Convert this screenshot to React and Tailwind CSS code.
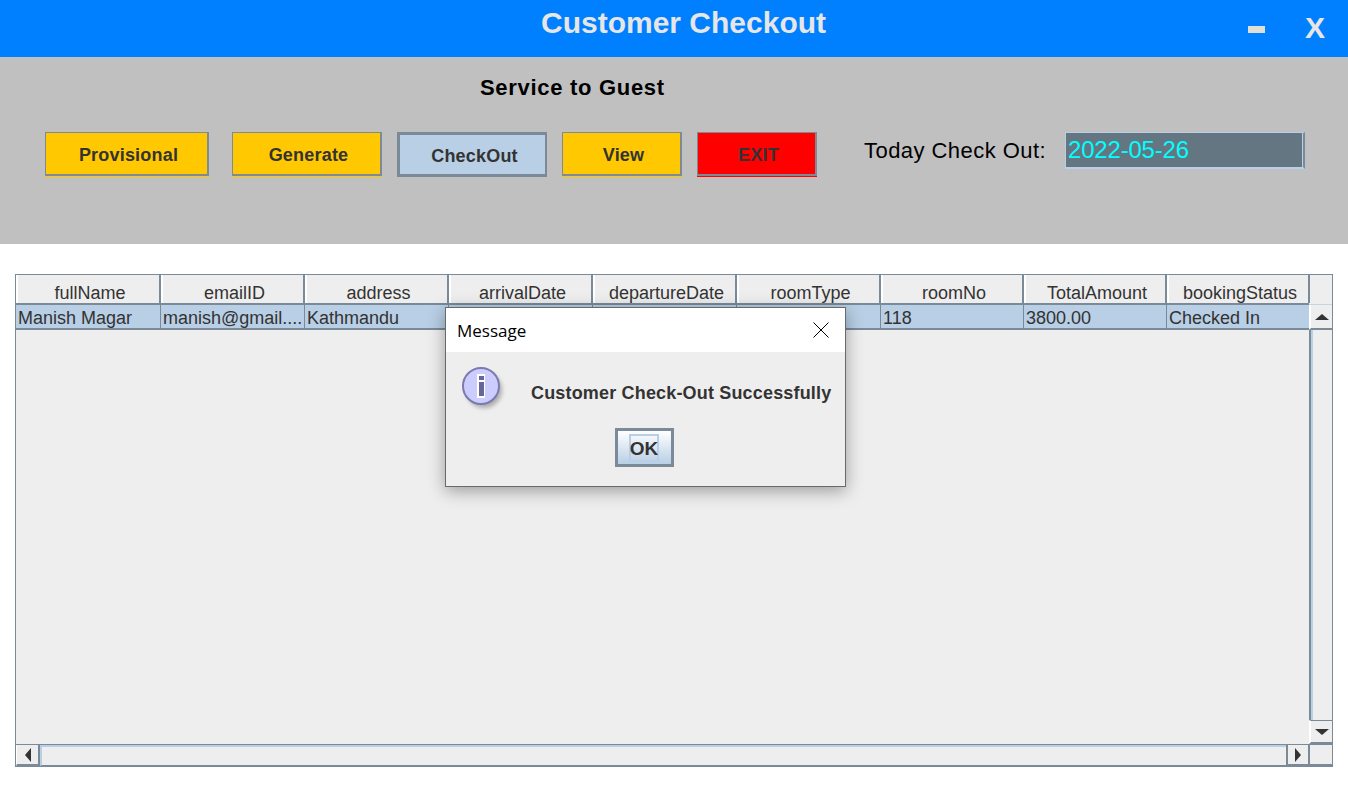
import React from "react";

const columns = [
  { name: "fullName", value: "Manish Magar", width: "w-[145px]" },
  { name: "emailID", value: "manish@gmail....", width: "w-[144px]" },
  { name: "address", value: "Kathmandu", width: "w-[144px]" },
  { name: "arrivalDate", value: "", width: "w-[144px]" },
  { name: "departureDate", value: "", width: "w-[144px]" },
  { name: "roomType", value: "", width: "w-[144px]" },
  { name: "roomNo", value: "118", width: "w-[143px]" },
  { name: "TotalAmount", value: "3800.00", width: "w-[143px]" },
  { name: "bookingStatus", value: "Checked In", width: "w-[143px]" },
];

const flatBorder = "h-[44px] pt-[4px] border-t border-l border-r-2 border-b-2 border-[#7f8a94]";

function ActionButton({ label, className }) {
  return (
    <button className={`flex items-center justify-center pl-[4px] text-[18px] tracking-[0.2px] font-bold text-[#333333] ${className}`}>
      {label}
    </button>
  );
}

function InfoIcon() {
  return (
    <svg width="48" height="48" viewBox="0 0 48 48" className="shrink-0">
      <defs>
        <filter id="soft" x="-30%" y="-30%" width="170%" height="170%">
          <feGaussianBlur stdDeviation="2" />
        </filter>
      </defs>
      <circle cx="22" cy="24" r="18" fill="#777777" opacity="0.55" filter="url(#soft)" />
      <circle cx="19" cy="20" r="18" fill="#ccccff" stroke="#7a7ab0" strokeWidth="2" />
      <rect x="15" y="8" width="8" height="24" fill="#ffffff" />
      <rect x="17" y="10" width="5" height="4" fill="#666699" />
      <rect x="17" y="16" width="5" height="14" fill="#666699" />
    </svg>
  );
}

function MessageDialog() {
  return (
    <div className="absolute left-[445px] top-[307px] w-[401px] h-[180px] flex flex-col bg-[#eeeeee] border border-[#666a6e] shadow-[0_4px_16px_rgba(0,0,0,0.35)]">
      <div className="h-[44px] shrink-0 bg-white flex items-center justify-between pl-[11px] pr-[16px]">
        <span className="pt-[1px] text-[17px] text-black font-['Open_Sans','Noto_Sans',sans-serif]">Message</span>
        <svg width="16" height="16" viewBox="0 0 16 16" className="mb-[1px]">
          <path d="M0.5 0.5 L15.5 15.5 M15.5 0.5 L0.5 15.5" stroke="#000000" strokeWidth="1" fill="none" />
        </svg>
      </div>
      <div className="flex pl-[16px] pt-[14px]">
        <InfoIcon />
        <span className="ml-[21px] mt-[17px] text-[18px] leading-[20px] tracking-[0.17px] font-bold text-[#333333] whitespace-nowrap">
          Customer Check-Out Successfully
        </span>
      </div>
      <div className="flex justify-center pr-[3px] mt-[14px]">
        <button className="w-[59px] h-[39px] border-[3px] border-[#7a8a99] bg-gradient-to-b from-white to-[#b8cfe5] flex items-center justify-center">
          <span className="w-[30px] h-[28px] pt-[3px] border-2 border-[#b8cfe5] flex items-center justify-center text-[19px] font-bold text-[#333333]">
            OK
          </span>
        </button>
      </div>
    </div>
  );
}

export default function App() {
  return (
    <div className="relative w-[1348px] h-[807px] bg-white overflow-hidden font-['Liberation_Sans',Arial,sans-serif]">
      {/* Title bar */}
      <div className="h-[57px] bg-[#0080ff] flex items-start">
        <h1 className="ml-[541px] mt-[5px] text-[30px] leading-[36px] font-bold text-[#e6e6e6]">Customer Checkout</h1>
        <div className="ml-auto mr-[40px] mt-[26px] w-[17px] h-[7px] bg-[#e0dfd8]" />
        <span className="mr-[23px] mt-[10px] text-[30px] leading-[36px] font-bold text-[#e6e6e6]">X</span>
      </div>

      {/* Service panel */}
      <div className="h-[187px] bg-[#c0c0c0]">
        <h2 className="pl-[480px] pt-[18px] text-[22px] leading-[26px] font-bold tracking-[0.7px] text-black">Service to Guest</h2>
        <div className="flex items-start pl-[45px] mt-[31px]">
          <ActionButton label="Provisional" className={`w-[164px] bg-[#ffc800] shadow-[0_1px_0_#ffc800] ${flatBorder}`} />
          <ActionButton label="Generate" className={`ml-[23px] w-[150px] bg-[#ffc800] shadow-[0_1px_0_#ffc800] ${flatBorder}`} />
          <ActionButton label="CheckOut" className="ml-[15px] w-[150px] h-[45px] pt-[3px] bg-[#b8cfe5] border-t-[3px] border-l-[3px] border-b-[3px] border-r-2 border-[#7a8a99]" />
          <ActionButton label="View" className={`ml-[15px] w-[120px] bg-[#ffc800] shadow-[0_1px_0_#ffc800] ${flatBorder}`} />
          <ActionButton label="EXIT" className={`ml-[15px] w-[120px] bg-[#ff0000] shadow-[0_1px_0_#ff0000] ${flatBorder}`} />
          <span className="ml-[47px] mt-[5px] text-[22px] leading-[28px] tracking-[0.45px] text-black">Today Check Out:</span>
          <div className="ml-[19px] w-[240px] h-[37px] bg-[#647682] border-t border-l border-b-2 border-[#b8cfe5] border-r-2 border-r-[#7a8a99] shadow-[inset_-1px_0_0_#b8cfe5] flex items-center pl-[2px] text-[24px] tracking-[-0.2px] text-[#00ffff]">
            2022-05-26
          </div>
        </div>
      </div>

      {/* Table */}
      <div className="ml-[15px] mt-[30px] w-[1318px] h-[493px] border border-[#7a8a99] bg-[#eeeeee] flex flex-col text-[18px] text-[#333333]">
        <div className="flex-1 flex min-h-0">
          <div className="flex-1 flex flex-col min-w-0">
            <div className="flex h-[30px] shrink-0 border-b-2 border-[#7a8a99]">
              {columns.map((col) => (
                <div key={col.name} className={`${col.width} shrink-0 flex items-center justify-center pl-[3px] pt-[9px] border-l-2 border-white border-r-2 border-r-[#7a8a99]`}>
                  {col.name}
                </div>
              ))}
            </div>
            <div className="flex h-[25px] shrink-0 bg-[#b8cfe5] border-b-2 border-[#7a8a99]">
              {columns.map((col) => (
                <div key={col.name} className={`${col.width} shrink-0 pl-[2px] pt-[1px] leading-[24px] whitespace-nowrap border-r border-[#7a8a99]`}>
                  {col.value}
                </div>
              ))}
            </div>
            <div className="flex-1" />
          </div>
          {/* Vertical scrollbar */}
          <div className="w-[23px] shrink-0 flex flex-col">
            <div className="h-[30px] shrink-0 border-b border-[#c8d4df]" />
            <div className="h-[25px] shrink-0 bg-[#eeeeee] border-l-2 border-white flex items-center justify-center border-b-2 border-b-[#7a8a99]">
              <div className="w-0 h-0 border-x-[7px] border-x-transparent border-b-[6px] border-b-[#333333]" />
            </div>
            <div className="flex-1 border-l-2 border-[#7a8a99] shadow-[inset_2px_0_0_#b8cfe5]" />
            <div className="h-[24px] shrink-0 bg-[#eeeeee] border-t border-[#7a8a99] border-l-2 border-l-white flex items-center justify-center border-b-2 border-b-[#7a8a99]">
              <div className="w-0 h-0 border-x-[7px] border-x-transparent border-t-[6px] border-t-[#333333]" />
            </div>
          </div>
        </div>
        {/* Horizontal scrollbar */}
        <div className="h-[22px] shrink-0 flex border-t border-[#7a8a99]">
          <div className="w-[24px] shrink-0 bg-[#eeeeee] border-l border-white flex items-center justify-center border-r-2 border-r-[#7a8a99] border-b-2 border-b-[#7a8a99]">
            <div className="w-0 h-0 border-y-[7px] border-y-transparent border-r-[6px] border-r-[#333333]" />
          </div>
          <div className="flex-1 border-l-2 border-t-2 border-[#b8cfe5] border-b border-b-[#7a8a99]" />
          <div className="w-[24px] shrink-0 bg-[#eeeeee] flex items-center justify-center border-x-2 border-[#7a8a99] border-b-2 border-b-[#7a8a99]">
            <div className="w-0 h-0 border-y-[7px] border-y-transparent border-l-[6px] border-l-[#333333]" />
          </div>
          <div className="w-[22px] shrink-0 border-b-2 border-[#7a8a99]" />
        </div>
      </div>

      <MessageDialog />
    </div>
  );
}
